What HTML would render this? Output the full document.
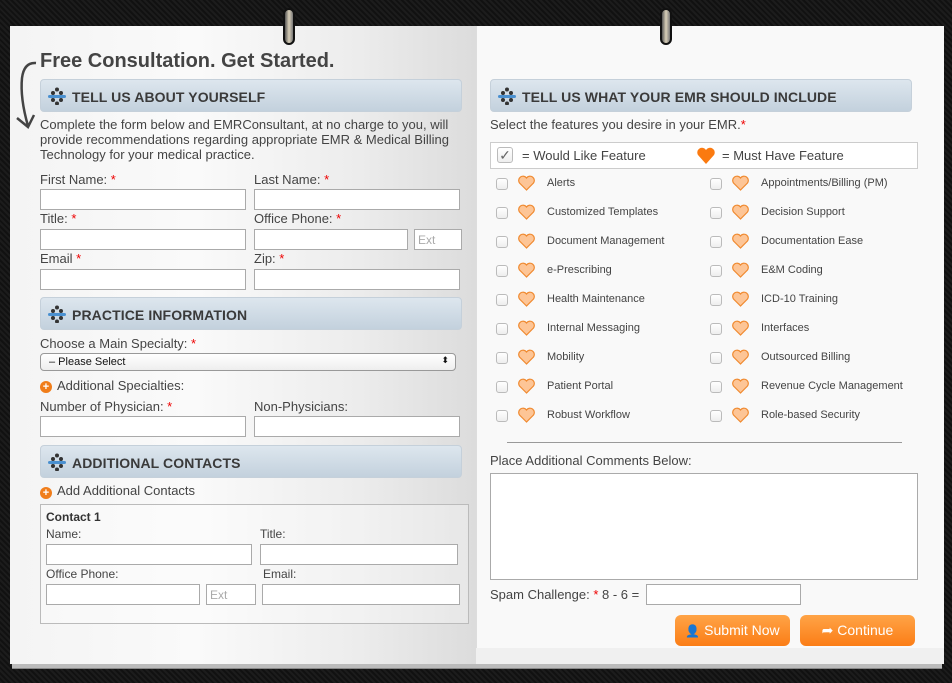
<!DOCTYPE html>
<html><head><meta charset="utf-8"><style>
*{box-sizing:border-box;margin:0;padding:0}
body{width:952px;height:683px;background:#151515;position:relative;overflow:hidden;font-family:"Liberation Sans",sans-serif;color:#444}
.a{position:absolute}
.lp{left:10px;top:26px;width:466px;height:638px;background:linear-gradient(90deg,#f4f4f4 0%,#fafafa 40%,#ececec 75%,#dcdcdc 100%)}
.rp{left:476px;top:26px;width:468px;height:622px;background:#f9f9f9;border-left:1px solid #ddd}
.rp2{left:476px;top:648px;width:468px;height:16px;background:#f0f0f0}
.hd{height:33px;border:1px solid #c5d0da;border-radius:4px;background:linear-gradient(#dde6ee,#c3d1dd);font-weight:bold;font-size:14px;color:#3a3a3a;padding:9px 0 0 31px;letter-spacing:.1px}
.ic{position:absolute;left:7px;top:7px;width:18px;height:18px}
.lb{font-size:13px;color:#444;white-space:nowrap}
.s{color:#e00}
.in{height:21px;background:#fff;border:1px solid #aaa}
.ext{font-size:12px;color:#aaa;padding:3px 0 0 3px}
.ft{font-size:11px;color:#444;white-space:nowrap}
.cb{width:12px;height:12px;border:1px solid #bbb;border-radius:3px;background:linear-gradient(#fff,#eee)}
.pl{width:12px;height:12px;border-radius:50%;background:#f07d1a;color:#fff;font-size:11px;font-weight:bold;line-height:12px;text-align:center}
.btn{height:31px;border-radius:6px;background:linear-gradient(#ffa447,#fb7d16);color:#fff;font-size:14px;padding:7px 0 0 0;text-align:center}
</style></head><body>
<div class="a" style="left:0;top:0;width:952px;height:683px;background:repeating-linear-gradient(45deg,#1c1c1c 0 2px,#111 2px 4px)"></div>
<div class="a" style="left:12px;top:664px;width:930px;height:5px;background:#bbb;border-bottom:1px solid #888"></div>
<div class="a lp"></div>
<div class="a rp"></div>
<div class="a rp2"></div>
<div class="a" style="left:283px;top:8px;width:12px;height:37px;border-radius:6px;background:linear-gradient(90deg,#555,#d8cfb8,#777);border:2px solid #111"></div>
<div class="a" style="left:660px;top:8px;width:12px;height:37px;border-radius:6px;background:linear-gradient(90deg,#555,#d8cfb8,#777);border:2px solid #111"></div>
<svg class="a" style="left:14px;top:58px" width="26" height="72"><path d="M22 5 Q10 4 8 20 Q6 40 14 68" stroke="#444" stroke-width="2.5" fill="none"/><path d="M3 60 L14 69 L20 57" stroke="#444" stroke-width="2.5" fill="none"/></svg>

<div class="a" style="left:40px;top:50px;font-size:20px;font-weight:bold;color:#444">Free Consultation. Get Started.</div>

<svg width="0" height="0" style="position:absolute"><defs><g id="lg"><circle cx="9" cy="2.5" r="2" fill="#333"/><circle cx="5" cy="6" r="2" fill="#333"/><circle cx="13" cy="6" r="2" fill="#333"/><rect x="0" y="8" width="18" height="3" rx="1.5" fill="#4a90d0"/><circle cx="5" cy="13" r="2" fill="#333"/><circle cx="13" cy="13" r="2" fill="#333"/><circle cx="9" cy="16.5" r="2" fill="#333"/></g></defs></svg>

<div class="a hd" style="left:40px;top:79px;width:422px"><svg class="ic"><use href="#lg"/></svg>TELL US ABOUT YOURSELF</div>
<div class="a" style="left:40px;top:117px;width:418px;font-size:13px;line-height:15px;color:#444">Complete the form below and EMRConsultant, at no charge to you, will provide recommendations regarding appropriate EMR &amp; Medical Billing Technology for your medical practice.</div>

<div class="a lb" style="left:40px;top:172px">First Name: <span class="s">*</span></div>
<div class="a lb" style="left:254px;top:172px">Last Name: <span class="s">*</span></div>
<div class="a in" style="left:40px;top:189px;width:206px"></div>
<div class="a in" style="left:254px;top:189px;width:206px"></div>
<div class="a lb" style="left:40px;top:211px">Title: <span class="s">*</span></div>
<div class="a lb" style="left:254px;top:211px">Office Phone: <span class="s">*</span></div>
<div class="a in" style="left:40px;top:229px;width:206px"></div>
<div class="a in" style="left:254px;top:229px;width:154px"></div>
<div class="a in ext" style="left:414px;top:229px;width:48px">Ext</div>
<div class="a lb" style="left:40px;top:251px">Email <span class="s">*</span></div>
<div class="a lb" style="left:254px;top:251px">Zip: <span class="s">*</span></div>
<div class="a in" style="left:40px;top:269px;width:206px"></div>
<div class="a in" style="left:254px;top:269px;width:206px"></div>

<div class="a hd" style="left:40px;top:297px;width:422px"><svg class="ic"><use href="#lg"/></svg>PRACTICE INFORMATION</div>
<div class="a lb" style="left:40px;top:336px">Choose a Main Specialty: <span class="s">*</span></div>
<div class="a" style="left:40px;top:353px;width:416px;height:18px;border:1px solid #999;border-radius:4px;background:linear-gradient(#fff,#eee);font-size:11px;color:#111;padding:2px 0 0 8px">– Please Select<span style="position:absolute;right:6px;top:1px;font-size:9px">⬍</span></div>
<div class="a pl" style="left:40px;top:381px">+</div>
<div class="a lb" style="left:57px;top:378px">Additional Specialties:</div>
<div class="a lb" style="left:40px;top:399px">Number of Physician: <span class="s">*</span></div>
<div class="a lb" style="left:254px;top:399px">Non-Physicians:</div>
<div class="a in" style="left:40px;top:416px;width:206px"></div>
<div class="a in" style="left:254px;top:416px;width:206px"></div>

<div class="a hd" style="left:40px;top:445px;width:422px"><svg class="ic"><use href="#lg"/></svg>ADDITIONAL CONTACTS</div>
<div class="a pl" style="left:40px;top:487px">+</div>
<div class="a lb" style="left:57px;top:483px">Add Additional Contacts</div>
<div class="a" style="left:40px;top:504px;width:429px;height:120px;border:1px solid #bbb;background:rgba(255,255,255,.3)"></div>
<div class="a lb" style="left:46px;top:510px;font-size:12px;font-weight:bold;color:#333">Contact 1</div>
<div class="a lb" style="left:46px;top:527px;font-size:12px">Name:</div>
<div class="a lb" style="left:260px;top:527px;font-size:12px">Title:</div>
<div class="a in" style="left:46px;top:544px;width:206px"></div>
<div class="a in" style="left:260px;top:544px;width:198px"></div>
<div class="a lb" style="left:46px;top:567px;font-size:12px">Office Phone:</div>
<div class="a lb" style="left:263px;top:567px;font-size:12px">Email:</div>
<div class="a in" style="left:46px;top:584px;width:154px"></div>
<div class="a in ext" style="left:206px;top:584px;width:50px">Ext</div>
<div class="a in" style="left:262px;top:584px;width:198px"></div>

<div class="a hd" style="left:490px;top:79px;width:422px"><svg class="ic"><use href="#lg"/></svg>TELL US WHAT YOUR EMR SHOULD INCLUDE</div>
<div class="a lb" style="left:490px;top:117px">Select the features you desire in your EMR.<span class="s">*</span></div>
<div class="a" style="left:490px;top:142px;width:428px;height:27px;border:1px solid #ccc;background:#fff"></div>
<div class="a cb" style="left:497px;top:147px;width:16px;height:16px;color:#666;font-size:14px;line-height:14px;text-align:center">✓</div>
<div class="a lb" style="left:522px;top:148px">= Would Like Feature</div>
<svg class="a" style="left:696px;top:147px" width="20" height="18"><path d="M10 17 L2 8 A4.5 4.5 0 0 1 10 3 A4.5 4.5 0 0 1 18 8 Z" fill="#fb7a10"/></svg>
<div class="a lb" style="left:722px;top:148px">= Must Have Feature</div>

<svg width="0" height="0" style="position:absolute"><defs><g id="ht"><path d="M8.5 15 L1.5 8 A3.8 3.8 0 0 1 8.5 3 A3.8 3.8 0 0 1 15.5 8 Z" fill="#fdc596" stroke="#f08a30" stroke-width="1.2"/></g></defs></svg>

<div class="a" style="left:507px;top:442px;width:395px;height:1px;background:#999"></div>
<div class="a lb" style="left:490px;top:453px">Place Additional Comments Below:</div>
<div class="a in" style="left:490px;top:473px;width:428px;height:107px"></div>
<div class="a lb" style="left:490px;top:587px">Spam Challenge: <span class="s">*</span> 8 - 6 =</div>
<div class="a in" style="left:646px;top:584px;width:155px"></div>
<div class="a btn" style="left:675px;top:615px;width:115px"><span style="font-size:12px">👤</span> Submit Now</div>
<div class="a btn" style="left:800px;top:615px;width:115px">➦ Continue</div>

<div class="a cb" style="left:496px;top:178px"></div><svg class="a" style="left:518px;top:175px" width="18" height="17"><use href="#ht"/></svg><div class="a ft" style="left:547px;top:177px">Alerts</div>
<div class="a cb" style="left:710px;top:178px"></div><svg class="a" style="left:732px;top:175px" width="18" height="17"><use href="#ht"/></svg><div class="a ft" style="left:761px;top:177px">Appointments/Billing (PM)</div>
<div class="a cb" style="left:496px;top:207px"></div><svg class="a" style="left:518px;top:204px" width="18" height="17"><use href="#ht"/></svg><div class="a ft" style="left:547px;top:206px">Customized Templates</div>
<div class="a cb" style="left:710px;top:207px"></div><svg class="a" style="left:732px;top:204px" width="18" height="17"><use href="#ht"/></svg><div class="a ft" style="left:761px;top:206px">Decision Support</div>
<div class="a cb" style="left:496px;top:236px"></div><svg class="a" style="left:518px;top:233px" width="18" height="17"><use href="#ht"/></svg><div class="a ft" style="left:547px;top:235px">Document Management</div>
<div class="a cb" style="left:710px;top:236px"></div><svg class="a" style="left:732px;top:233px" width="18" height="17"><use href="#ht"/></svg><div class="a ft" style="left:761px;top:235px">Documentation Ease</div>
<div class="a cb" style="left:496px;top:265px"></div><svg class="a" style="left:518px;top:262px" width="18" height="17"><use href="#ht"/></svg><div class="a ft" style="left:547px;top:264px">e-Prescribing</div>
<div class="a cb" style="left:710px;top:265px"></div><svg class="a" style="left:732px;top:262px" width="18" height="17"><use href="#ht"/></svg><div class="a ft" style="left:761px;top:264px">E&amp;M Coding</div>
<div class="a cb" style="left:496px;top:294px"></div><svg class="a" style="left:518px;top:291px" width="18" height="17"><use href="#ht"/></svg><div class="a ft" style="left:547px;top:293px">Health Maintenance</div>
<div class="a cb" style="left:710px;top:294px"></div><svg class="a" style="left:732px;top:291px" width="18" height="17"><use href="#ht"/></svg><div class="a ft" style="left:761px;top:293px">ICD-10 Training</div>
<div class="a cb" style="left:496px;top:323px"></div><svg class="a" style="left:518px;top:320px" width="18" height="17"><use href="#ht"/></svg><div class="a ft" style="left:547px;top:322px">Internal Messaging</div>
<div class="a cb" style="left:710px;top:323px"></div><svg class="a" style="left:732px;top:320px" width="18" height="17"><use href="#ht"/></svg><div class="a ft" style="left:761px;top:322px">Interfaces</div>
<div class="a cb" style="left:496px;top:352px"></div><svg class="a" style="left:518px;top:349px" width="18" height="17"><use href="#ht"/></svg><div class="a ft" style="left:547px;top:351px">Mobility</div>
<div class="a cb" style="left:710px;top:352px"></div><svg class="a" style="left:732px;top:349px" width="18" height="17"><use href="#ht"/></svg><div class="a ft" style="left:761px;top:351px">Outsourced Billing</div>
<div class="a cb" style="left:496px;top:381px"></div><svg class="a" style="left:518px;top:378px" width="18" height="17"><use href="#ht"/></svg><div class="a ft" style="left:547px;top:380px">Patient Portal</div>
<div class="a cb" style="left:710px;top:381px"></div><svg class="a" style="left:732px;top:378px" width="18" height="17"><use href="#ht"/></svg><div class="a ft" style="left:761px;top:380px">Revenue Cycle Management</div>
<div class="a cb" style="left:496px;top:410px"></div><svg class="a" style="left:518px;top:407px" width="18" height="17"><use href="#ht"/></svg><div class="a ft" style="left:547px;top:409px">Robust Workflow</div>
<div class="a cb" style="left:710px;top:410px"></div><svg class="a" style="left:732px;top:407px" width="18" height="17"><use href="#ht"/></svg><div class="a ft" style="left:761px;top:409px">Role-based Security</div>
</body></html>
